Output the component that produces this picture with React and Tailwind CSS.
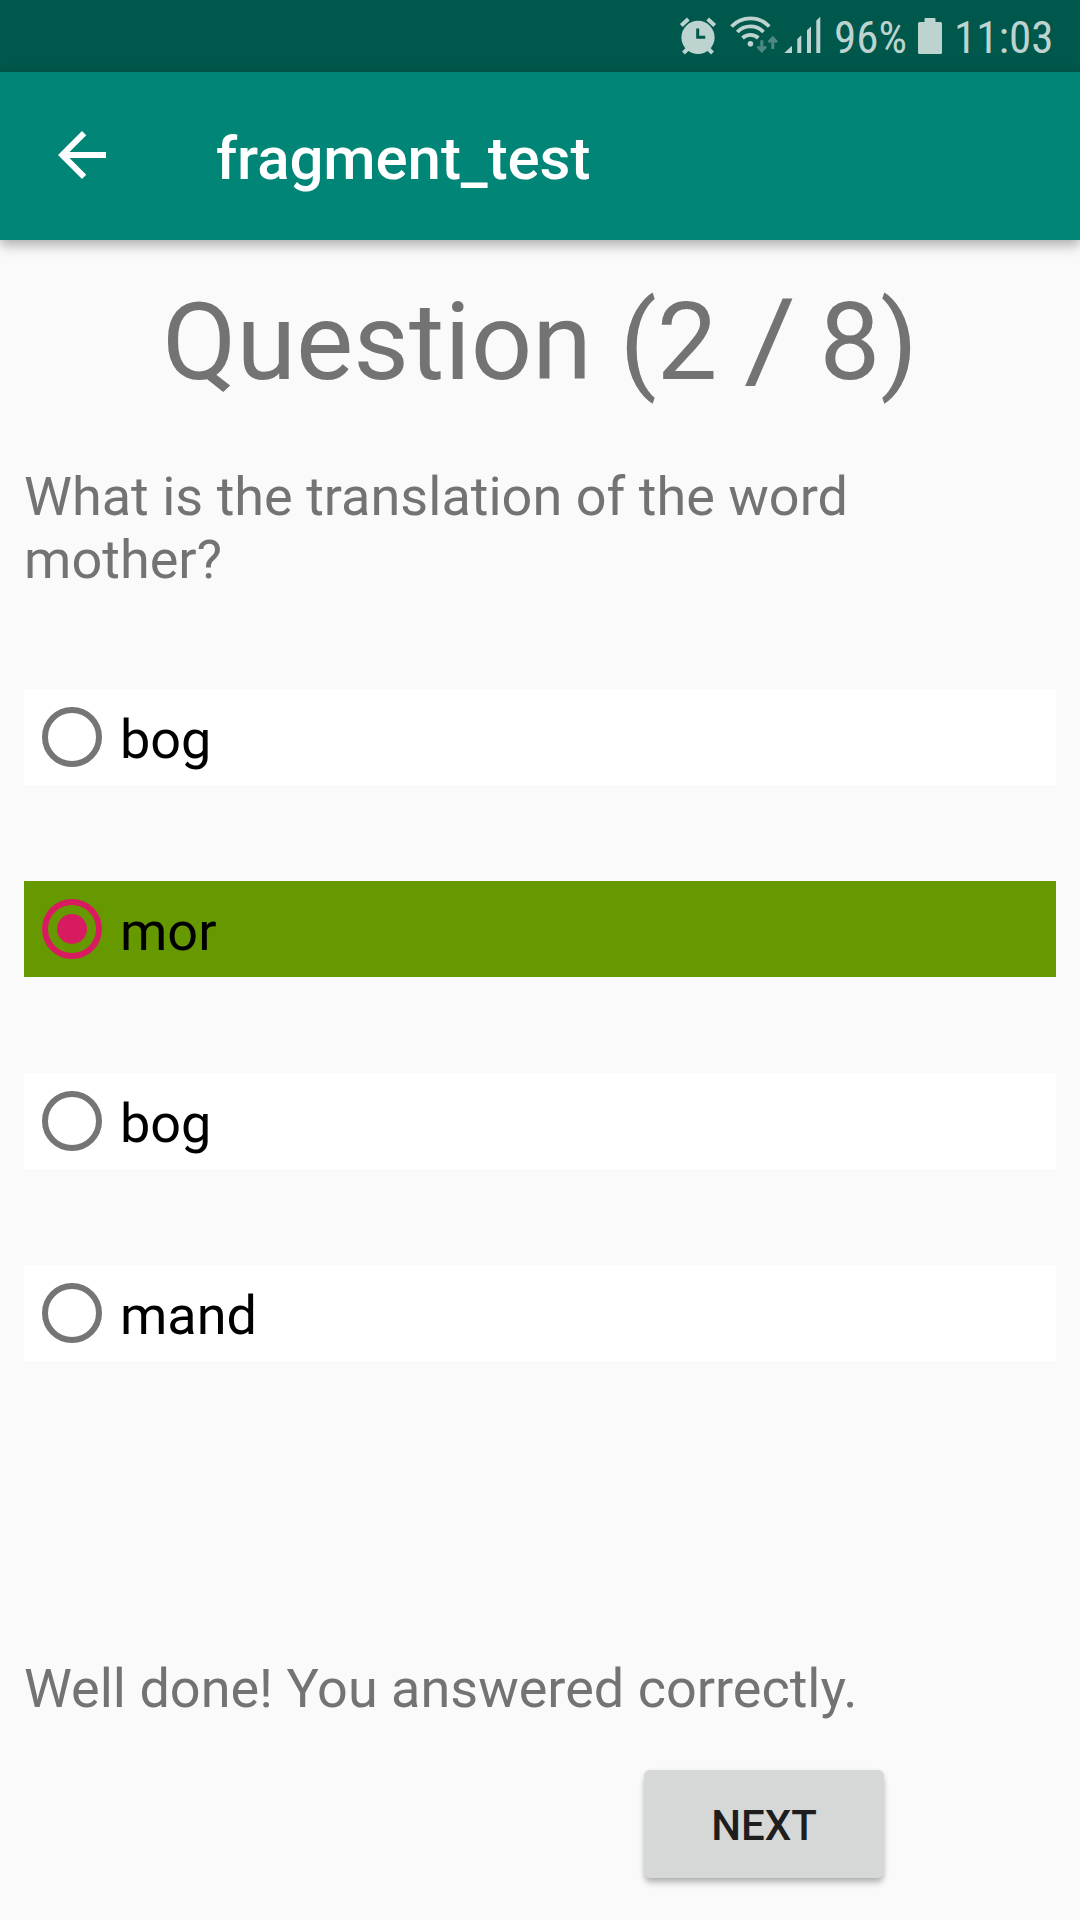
const options = [
  { label: "bog", selected: false },
  { label: "mor", selected: true },
  { label: "bog", selected: false },
  { label: "mand", selected: false },
];

function StatusIcons() {
  return (
    <svg className="h-[72px] w-[150px] shrink-0" viewBox="676 0 150 72" fill="none" stroke="currentColor">
      {/* alarm clock */}
      <circle cx="698" cy="37.4" r="16.6" fill="currentColor" stroke="none" />
      <path d="M681.300 25.500l7-6.500M714.700 25.500l-7-6.500" strokeWidth="4" />
      <path d="M683.500 53l5-5M712.500 53l-5-5" strokeWidth="4" />
      <path d="M697.700 28.500v8.700h7.500" stroke="#00574b" strokeWidth="3" />
      {/* wifi */}
      <path d="M731.500 26.500A26 26 0 0 1 769.300 26.500M737.300 32A18 18 0 0 1 763.500 32M742.500 38A11.500 11.500 0 0 1 758.300 38" strokeWidth="3.800" />
      <circle cx="750.400" cy="43.700" r="2.800" fill="currentColor" stroke="none" />
      <path d="M761.800 40.300v10.500M757.700 46.500l4.100 4.300 4.100-4.300M772.800 49v-11M768.700 42.200l4.100-4.300 4.100 4.300" stroke="#4d8980" strokeWidth="3" />
      {/* signal */}
      <path d="M784.300 53l7.700-7.300V53zM797.300 53V39l4-3.700V53zM807 53V30.200l4-3.700V53zM816.300 53V20.400l4-3.700V53z" fill="currentColor" stroke="none" />
    </svg>
  );
}

function Radio({ selected }) {
  return (
    <svg
      className={selected ? "h-[96px] w-[96px] shrink-0 text-[#d81b60]" : "h-[96px] w-[96px] shrink-0 text-[#757575]"}
      viewBox="0 0 96 96"
      fill="none"
    >
      <circle cx="48" cy="48" r="27" stroke="currentColor" strokeWidth="6" />
      {selected && <circle cx="48" cy="48" r="15" fill="currentColor" />}
    </svg>
  );
}

export default function App() {
  return (
    <div className="flex h-[1920px] w-[1080px] flex-col overflow-hidden bg-[#fafafa] font-['Roboto',sans-serif] text-[#737373]">
      <div className="flex h-[72px] shrink-0 items-start bg-[#00574b] pl-[676px] text-[45px] leading-[52px] text-[#bcd3d0] [font-stretch:75%]">
        <StatusIcons />
        <span className="ml-[8px] mt-[12px] w-[84px] shrink-0">96%</span>
        <svg className="h-[72px] w-[24px] shrink-0" viewBox="0 0 24 72" fill="currentColor">
          <path d="M7.500 18h9a1 1 0 0 1 1 1v3H22.500a1.500 1.500 0 0 1 1.500 1.500V52.500a1.500 1.500 0 0 1-1.500 1.500H1.500A1.500 1.500 0 0 1 0 52.500V23.500A1.500 1.500 0 0 1 1.500 22H6.500V19a1 1 0 0 1 1-1z" />
        </svg>
        <span className="ml-[12px] mt-[12px]">11:03</span>
      </div>

      <header className="z-10 flex h-[168px] shrink-0 items-center bg-[#008577] pl-[46px] text-white shadow-[0_5px_12px_rgba(0,0,0,0.32)]">
        <svg className="mb-[2px] h-[72px] w-[72px]" viewBox="0 0 24 24" fill="currentColor">
          <path d="M20 11H7.830l5.590-5.590L12 4l-8 8 8 8 1.410-1.410L7.830 13H20v-2z" />
        </svg>
        <h1 className="ml-[98px] mt-[5px] text-[60px] font-medium leading-[70px] tracking-[-0.08px]">
          fragment<span className="inline-block translate-y-[4px]">_</span>test
        </h1>
      </header>

      <h2 className="mt-[30px] text-center text-[108px] leading-[144px]">
        <span className="mr-px">Question</span> (2{" "}
        <span className="mr-[4px] inline-block origin-left -translate-y-[1.5px] scale-x-[1.17] scale-y-[1.05]">/</span> 8)
      </h2>
      <p className="ml-[24px] mt-[51px] w-[900px] text-[54px] leading-[63px] tracking-[0.02px]">What is the translation of the word mother?</p>

      <div className="mx-[24px] mt-[98px] flex flex-col gap-[96px]">
        {options.map((option, i) => (
          <div
            key={i}
            className={option.selected ? "flex h-[96px] items-center bg-[#669900] text-black" : "flex h-[96px] items-center bg-white text-black"}
          >
            <Radio selected={option.selected} />
            <span className="mt-[5px] text-[54px] leading-[63px]">{option.label}</span>
          </div>
        ))}
      </div>

      <p className="ml-[24px] mt-[296px] text-[54px] leading-[63px]">Well done! You answered correctly.</p>
      <button className="ml-[644px] mt-[50px] flex h-[108px] w-[240px] shrink-0 items-center justify-center rounded-[6px] bg-[#d6d8d7] pt-[3px] text-[42px] font-medium leading-[49px] text-[#1e1e1e] shadow-[0_6px_6px_-1px_rgba(0,0,0,0.24),0_1px_5px_rgba(0,0,0,0.1)]">
        NEXT
      </button>
    </div>
  );
}
